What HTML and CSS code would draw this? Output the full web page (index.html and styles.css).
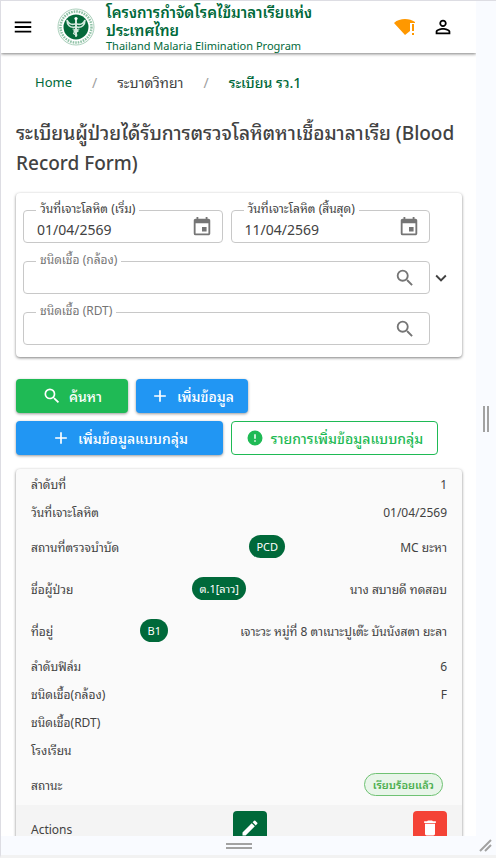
FILE: index.html
```html
<!DOCTYPE html>
<html lang="th">
<head>
  <meta charset="UTF-8" />
  <meta name="viewport" content="width=device-width, initial-scale=1.0"/>
  <title>ระเบียน รว.1</title>
  <link rel="stylesheet" href="styles.css">
</head>
<body>
  <div class="device">
    <div class="screen">
      <header class="topbar">
        <button class="icon-btn menu" aria-label="menu">
          <svg width="22" height="22" viewBox="0 0 24 24"><path d="M3 18h18v-2H3v2zm0-5h18v-2H3v2zm0-7v2h18V6H3z"/></svg>
        </button>
        <svg class="logo" width="38" height="38" viewBox="0 0 38 38" aria-hidden="true">
          <circle cx="19" cy="19" r="18" fill="#fff" stroke="#a9cfba" stroke-width="1"/>
          <circle cx="19" cy="19" r="15.5" fill="none" stroke="#8fc2a6" stroke-width="2.5" stroke-dasharray="1.6 1"/>
          <circle cx="19" cy="19" r="12.5" fill="#04693a"/>
          <g stroke="#d5eadf" fill="none" stroke-linecap="round">
            <path d="M19 11v17" stroke-width="2"/>
            <path d="M18 16c-3 1-6 0-8-4 0 5 3 8 8 7M20 16c3 1 6 0 8-4 0 5-3 8-8 7" stroke-width="1.6"/>
            <path d="M16 21c5 1 7 2 3 3s-3 2 1 3M22 21c-5 1-7 2-3 3" stroke-width="1.2"/>
          </g>
          <circle cx="19" cy="10.500" r="1.6" fill="#fff"/>
        </svg>
        <div class="brand">
          <div class="brand-th">โครงการกำจัดโรคไข้มาลาเรียแห่งประเทศไทย</div>
          <div class="brand-en">Thailand Malaria Elimination Program</div>
        </div>
        <svg class="wifi" width="22" height="22" viewBox="0 0 22 22" aria-hidden="true">
          <path d="M0 7C3 4 7 3 11 3s7 1 10 3v1h-5v8l-5 4z" fill="#ff9800"/>
          <path d="M18 8h2v7h-2zM18 17h2v2h-2z" fill="#ff9800"/>
        </svg>
        <button class="icon-btn" aria-label="account">
          <svg width="22" height="22" viewBox="0 0 24 24"><path d="M12 5.900a2.100 2.100 0 1 1 0 4.200 2.100 2.100 0 0 1 0-4.200m0 9c2.970 0 6.100 1.460 6.100 2.100v1.100H5.900V17c0-.640 3.130-2.100 6.100-2.100M12 4C9.790 4 8 5.790 8 8s1.790 4 4 4 4-1.790 4-4-1.790-4-4-4zm0 9c-2.670 0-8 1.340-8 4v3h16v-3c0-2.660-5.330-4-8-4z"/></svg>
        </button>
      </header>

      <main>
        <nav class="crumbs">
          <a href="#" class="home">Home</a>
          <span class="sep">/</span>
          <span>ระบาดวิทยา</span>
          <span class="sep">/</span>
          <a href="#" class="current">ระเบียน รว.1</a>
        </nav>

        <h1>ระเบียนผู้ป่วยได้รับการตรวจโลหิตหาเชื้อมาลาเรีย (Blood Record Form)</h1>

        <form class="card filters">
          <div class="fields">
            <div class="field">
              <label for="start">วันที่เจาะโลหิต (เริ่ม)</label>
              <input id="start" type="text" value="01/04/2569">
              <svg width="22" height="22" viewBox="0 0 24 24"><path d="M17 12h-5v5h5v-5zM16 1v2H8V1H6v2H5c-1.110 0-2 .9-2 2v14a2 2 0 0 0 2 2h14c1.100 0 2-.9 2-2V5c0-1.100-.9-2-2-2h-1V1h-2zm3 18H5V8h14v11z"/></svg>
            </div>
            <div class="field">
              <label for="end">วันที่เจาะโลหิต (สิ้นสุด)</label>
              <input id="end" type="text" value="11/04/2569">
              <svg width="22" height="22" viewBox="0 0 24 24"><path d="M17 12h-5v5h5v-5zM16 1v2H8V1H6v2H5c-1.110 0-2 .9-2 2v14a2 2 0 0 0 2 2h14c1.100 0 2-.9 2-2V5c0-1.100-.9-2-2-2h-1V1h-2zm3 18H5V8h14v11z"/></svg>
            </div>
            <div class="field wide">
              <label for="scope">ชนิดเชื้อ (กล้อง)</label>
              <input id="scope" type="text">
              <svg width="22" height="22" viewBox="0 0 24 24"><path d="M15.500 14h-.79l-.28-.27A6.471 6.471 0 0 0 16 9.500 6.500 6.500 0 1 0 9.500 16c1.610 0 3.090-.59 4.230-1.570l.27.28v.79l5 4.990L20.490 19l-4.990-5zm-6 0C7.010 14 5 11.990 5 9.500S7.010 5 9.500 5 14 7.010 14 9.500 11.990 14 9.500 14z"/></svg>
            </div>
            <div class="field wide">
              <label for="rdt">ชนิดเชื้อ (RDT)</label>
              <input id="rdt" type="text">
              <svg width="22" height="22" viewBox="0 0 24 24"><path d="M15.500 14h-.79l-.28-.27A6.471 6.471 0 0 0 16 9.500 6.500 6.500 0 1 0 9.500 16c1.610 0 3.090-.59 4.230-1.570l.27.28v.79l5 4.990L20.490 19l-4.990-5zm-6 0C7.010 14 5 11.990 5 9.500S7.010 5 9.500 5 14 7.010 14 9.500 11.990 14 9.500 14z"/></svg>
            </div>
          </div>
          <button type="button" class="icon-btn expand" aria-label="expand">
            <svg width="22" height="22" viewBox="0 0 24 24"><path d="M16.590 8.590L12 13.170 7.410 8.590 6 10l6 6 6-6z"/></svg>
          </button>
        </form>

        <div class="actions">
          <div class="action-row">
            <button class="btn green">
              <svg width="20" height="20" viewBox="0 0 24 24"><path d="M15.500 14h-.79l-.28-.27A6.471 6.471 0 0 0 16 9.500 6.500 6.500 0 1 0 9.500 16c1.610 0 3.090-.59 4.230-1.570l.27.28v.79l5 4.990L20.490 19l-4.990-5zm-6 0C7.010 14 5 11.990 5 9.500S7.010 5 9.500 5 14 7.010 14 9.500 11.990 14 9.500 14z"/></svg>
              ค้นหา
            </button>
            <button class="btn blue">
              <svg width="20" height="20" viewBox="0 0 24 24"><path d="M19 13h-6v6h-2v-6H5v-2h6V5h2v6h6v2z"/></svg>
              เพิ่มข้อมูล
            </button>
          </div>
          <div class="action-row">
            <button class="btn blue long">
              <svg width="20" height="20" viewBox="0 0 24 24"><path d="M19 13h-6v6h-2v-6H5v-2h6V5h2v6h6v2z"/></svg>
              เพิ่มข้อมูลแบบกลุ่ม
            </button>
            <button class="btn outline long">
              <svg width="18" height="18" viewBox="0 0 24 24"><path d="M12 2a10 10 0 1 0 0 20 10 10 0 0 0 0-20zm1 15h-2v-2h2v2zm0-4h-2V7h2v6z"/></svg>
              รายการเพิ่มข้อมูลแบบกลุ่ม
            </button>
          </div>
        </div>

        <table class="card record">
          <tbody>
            <tr><th scope="row">ลำดับที่</th><td>1</td></tr>
            <tr><th scope="row">วันที่เจาะโลหิต</th><td>01/04/2569</td></tr>
            <tr class="tall"><th scope="row">สถานที่ตรวจบำบัด</th><td><span class="badge">PCD</span></td><td>MC ยะหา</td></tr>
            <tr class="tall"><th scope="row">ชื่อผู้ป่วย</th><td><span class="badge">ต.1[ลาว]</span></td><td>นาง สบายดี ทดสอบ</td></tr>
            <tr class="tall"><th scope="row">ที่อยู่</th><td><span class="badge">B1</span></td><td>เจาะวะ หมู่ที่ 8 ตาเนาะปูเต๊ะ บันนังสตา ยะลา</td></tr>
            <tr><th scope="row">ลำดับฟิล์ม</th><td>6</td></tr>
            <tr><th scope="row">ชนิดเชื้อ(กล้อง)</th><td>F</td></tr>
            <tr><th scope="row">ชนิดเชื้อ(RDT)</th><td></td></tr>
            <tr><th scope="row">โรงเรียน</th><td></td></tr>
            <tr class="state"><th scope="row">สถานะ</th><td><span class="status">เรียบร้อยแล้ว</span></td></tr>
            <tr class="tools">
              <th scope="row">Actions</th>
              <td><button class="tool edit" aria-label="edit"><svg width="20" height="20" viewBox="0 0 24 24"><path d="M3 17.250V21h3.750L17.810 9.940l-3.750-3.750L3 17.250zM20.710 7.040a1 1 0 0 0 0-1.410l-2.340-2.340a1 1 0 0 0-1.410 0l-1.830 1.830 3.750 3.750 1.830-1.830z"/></svg></button></td>
              <td><button class="tool delete" aria-label="delete"><svg width="20" height="20" viewBox="0 0 24 24"><path d="M6 19c0 1.100.9 2 2 2h8c1.100 0 2-.9 2-2V7H6v12zM19 4h-3.500l-1-1h-5l-1 1H5v2h14V4z"/></svg></button></td>
            </tr>
          </tbody>
        </table>
      </main>
    </div>
    <div class="handle-right"><i></i><i></i></div>
    <div class="handle-bottom"><i></i><i></i></div>
    <div class="handle-corner">
      <svg width="14" height="14" viewBox="0 0 14 14" stroke="#a2a2a2" stroke-width="2"><path d="M1 12L12 1M6 12L12 6"/></svg>
    </div>
  </div>
</body>
</html>
```
FILE: styles.css
```css
* {
  box-sizing: border-box;
}
body {
  margin: 0;
  background: #f9fbff;
  color: #424242;
  font-family: "Noto Sans Thai Looped", "Noto Looped Thai", Sarabun, Loma, Roboto, "Noto Sans", sans-serif;
  font-size: 12px;
}
button,
input {
  font-family: inherit;
}
svg {
  fill: currentColor;
  flex-shrink: 0;
}

/* device frame */
.device {
  display: grid;
  grid-template-columns: minmax(0, 1fr) 20px;
  grid-template-rows: minmax(0, 1fr) 19px;
  height: 100vh;
  border-top: 1px solid #dddde3;
  border-left: 1px solid #dddde3;
  border-bottom: 3px solid #f2f2f2;
}
.screen {
  overflow: hidden;
  background: #fff;
}
.handle-right,
.handle-bottom,
.handle-corner {
  display: flex;
  align-items: center;
  justify-content: center;
  gap: 2px;
}
.handle-right i {
  width: 2px;
  height: 26px;
  background: #a2a2a2;
}
.handle-bottom {
  flex-direction: column;
}
.handle-bottom i {
  width: 26px;
  height: 2px;
  background: #a2a2a2;
}

/* top bar */
.topbar {
  display: flex;
  align-items: center;
  height: 52px;
  padding: 0 22px 0 11px;
  box-shadow: 0 1px 3px rgba(0, 0, 0, 0.5);
}
.icon-btn {
  display: flex;
  padding: 0;
  border: none;
  background: none;
  color: #000;
  cursor: pointer;
}
.logo {
  margin: 0 11px 0 23px;
}
.brand {
  flex: 1;
  color: #00693a;
}
.brand-th {
  max-width: 240px;
  font-size: 15px;
  font-weight: 600;
  line-height: 18px;
}
.brand-en {
  font-size: 11px;
  line-height: 14px;
}
.wifi {
  margin-right: 16px;
}

main {
  padding: 0 14px 0 15px;
}
.crumbs {
  display: flex;
  gap: 20px;
  padding: 19px 19px 20px;
  font-size: 14px;
  line-height: 20px;
}
.crumbs a {
  color: #00693a;
  text-decoration: none;
}
.crumbs .home {
  font-size: 13px;
}
.crumbs .current {
  font-weight: 500;
}
.sep {
  color: #9e9e9e;
}
h1 {
  margin: 5px 0 16px;
  font-size: 19px;
  font-weight: 500;
  line-height: 30px;
}
.card {
  border-radius: 4px;
  box-shadow: 0 1px 3px rgba(0, 0, 0, 0.5);
}

/* search form */
.filters {
  display: flex;
  align-items: center;
  padding: 17px 10px 12px 7px;
}
.fields {
  flex: 1;
  display: grid;
  grid-template-columns: repeat(2, minmax(0, 1fr));
  gap: 18px 8px;
}
.field {
  position: relative;
  display: flex;
  align-items: center;
  height: 33px;
  padding: 0 9px 0 13px;
  border: 1px solid #c8c8c8;
  border-radius: 4px;
  color: #757575;
}
.field.wide {
  grid-column: span 2;
  padding-right: 13px;
}
.field label {
  position: absolute;
  top: -10px;
  left: 12px;
  padding: 0 4px;
  background: #fff;
  font-size: 12px;
  line-height: 14px;
}
.field:not(.wide) label {
  color: #424242;
}
.field input {
  flex: 1;
  min-width: 0;
  padding: 3px 0 0;
  border: none;
  outline: none;
  background: none;
  color: #424242;
  font-size: 14px;
}
.expand {
  color: #424242;
}

/* buttons */
.actions {
  display: flex;
  flex-direction: column;
  gap: 8px;
  margin: 22px 0 14px;
}
.action-row {
  display: flex;
  gap: 8px;
}
.btn {
  display: flex;
  align-items: center;
  justify-content: center;
  gap: 7px;
  width: 112px;
  height: 34px;
  padding: 0 0 2px;
  border: none;
  border-radius: 4px;
  box-shadow: 0 1px 3px rgba(0, 0, 0, 0.4);
  color: #fff;
  font-size: 14px;
  font-weight: 500;
  white-space: nowrap;
  cursor: pointer;
}
.btn svg {
  margin-top: 2px;
}
.btn.long {
  width: 207px;
}
.btn.green {
  background: #1fba55;
}
.btn.blue {
  background: #2196f3;
}
.btn.outline {
  border: 1px solid #1fba55;
  background: #fff;
  box-shadow: none;
  color: #1fba55;
}

/* record */
.record {
  display: block;
  overflow: hidden;
  background: #fafafa;
}
.record tbody {
  display: block;
}
.record tr {
  display: flex;
  align-items: center;
  justify-content: space-between;
  height: 28px;
  padding: 0 15px;
}
.record tr.tall {
  height: 42px;
}
.record tr.state {
  height: 42px;
}
.record tr.tools {
  height: 46px;
  background: #f4f4f4;
}
.record th {
  padding: 0 15px 0 0;
  font-weight: normal;
}
.record td {
  padding: 0;
}
.badge,
.status {
  display: block;
  border-radius: 12px;
  font-size: 11px;
  line-height: 23px;
}
.badge {
  padding: 0 7px;
  background: #00693a;
  color: #fff;
}
.status {
  margin-right: 4px;
  padding: 0 8px;
  border: 1px solid #6fc273;
  background: #e8f5e9;
  color: #4caf50;
  font-weight: 600;
  line-height: 21px;
}
.tool {
  display: flex;
  align-items: center;
  justify-content: center;
  width: 34px;
  height: 34px;
  padding: 0;
  border: none;
  border-radius: 4px;
  color: #fff;
  cursor: pointer;
}
.edit {
  background: #00693a;
}
.delete {
  background: #f44336;
}
```
